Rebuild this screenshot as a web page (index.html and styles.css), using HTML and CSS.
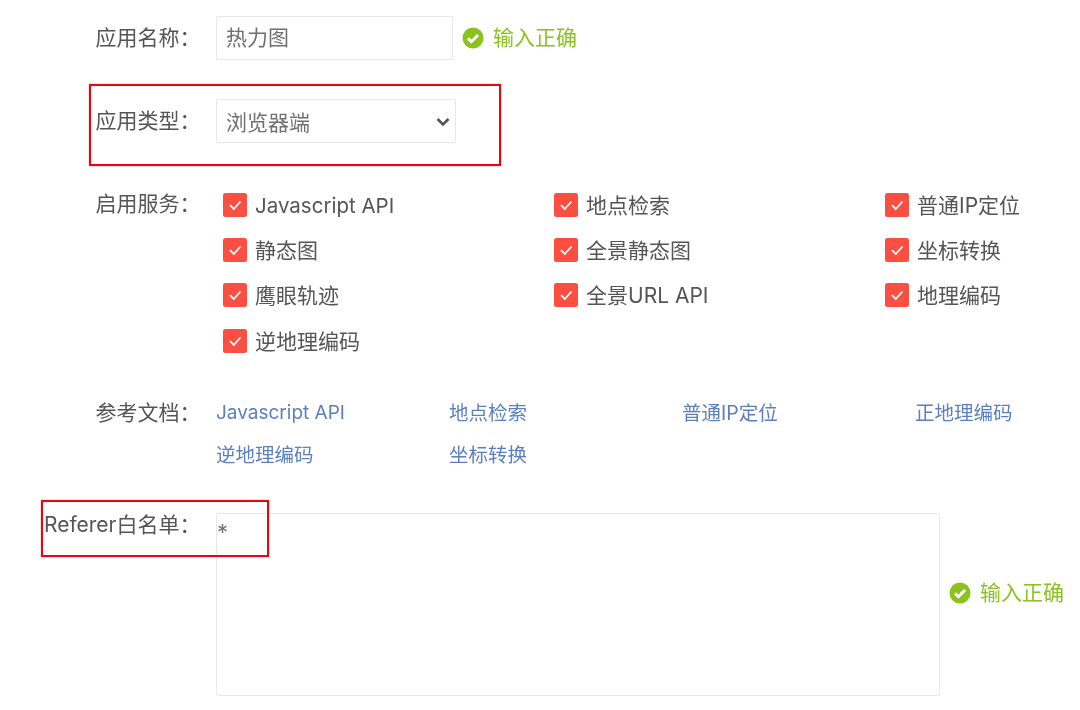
FILE: index.html
```html
<!DOCTYPE html>
<html lang="zh">
<head>
<meta charset="utf-8">
<title>应用配置</title>
<link rel="stylesheet" href="styles.css">
</head>
<body>
<form class="form">
  <div class="row row-name">
    <div class="label">应用名称：</div>
    <div class="field input-box">热力图</div>
    <div class="valid">
      <svg class="valid-icon" viewBox="0 0 22 22"><circle cx="11" cy="11" r="10.5" fill="#8cc21f"/><path d="M6 11.4l3.4 3.3L16 8" fill="none" stroke="#fff" stroke-width="3"/></svg>
      <span>输入正确</span>
    </div>
  </div>
  <div class="row row-type">
    <div class="label">应用类型：</div>
    <div class="field select-box">
      <span>浏览器端</span>
      <svg class="chevron" viewBox="0 0 14 10"><path d="M1.5 2l5.5 5.5L12.500 2" fill="none" stroke="#555" stroke-width="2.600"/></svg>
    </div>
    <div class="mark mark-type"></div>
  </div>
  <div class="row row-services">
    <div class="label">启用服务：</div>
    <div class="services">
      <div class="check check-latin"><svg class="box" viewBox="0 0 24 24"><rect width="24" height="24" rx="2.500" fill="#fb4f41"/><path d="M7 12.200l3.800 3.800L17.500 8.500" fill="none" stroke="#fff" stroke-width="1.800"/></svg>Javascript API</div>
      <div class="check"><svg class="box" viewBox="0 0 24 24"><rect width="24" height="24" rx="2.500" fill="#fb4f41"/><path d="M7 12.200l3.800 3.800L17.500 8.500" fill="none" stroke="#fff" stroke-width="1.800"/></svg>地点检索</div>
      <div class="check"><svg class="box" viewBox="0 0 24 24"><rect width="24" height="24" rx="2.500" fill="#fb4f41"/><path d="M7 12.200l3.800 3.800L17.500 8.500" fill="none" stroke="#fff" stroke-width="1.800"/></svg>普通IP定位</div>
      <div class="check"><svg class="box" viewBox="0 0 24 24"><rect width="24" height="24" rx="2.500" fill="#fb4f41"/><path d="M7 12.200l3.800 3.800L17.500 8.500" fill="none" stroke="#fff" stroke-width="1.800"/></svg>静态图</div>
      <div class="check"><svg class="box" viewBox="0 0 24 24"><rect width="24" height="24" rx="2.500" fill="#fb4f41"/><path d="M7 12.200l3.800 3.800L17.500 8.500" fill="none" stroke="#fff" stroke-width="1.800"/></svg>全景静态图</div>
      <div class="check"><svg class="box" viewBox="0 0 24 24"><rect width="24" height="24" rx="2.500" fill="#fb4f41"/><path d="M7 12.200l3.800 3.800L17.500 8.500" fill="none" stroke="#fff" stroke-width="1.800"/></svg>坐标转换</div>
      <div class="check"><svg class="box" viewBox="0 0 24 24"><rect width="24" height="24" rx="2.500" fill="#fb4f41"/><path d="M7 12.200l3.800 3.800L17.500 8.500" fill="none" stroke="#fff" stroke-width="1.800"/></svg>鹰眼轨迹</div>
      <div class="check"><svg class="box" viewBox="0 0 24 24"><rect width="24" height="24" rx="2.500" fill="#fb4f41"/><path d="M7 12.200l3.800 3.800L17.500 8.500" fill="none" stroke="#fff" stroke-width="1.800"/></svg>全景URL API</div>
      <div class="check"><svg class="box" viewBox="0 0 24 24"><rect width="24" height="24" rx="2.500" fill="#fb4f41"/><path d="M7 12.200l3.800 3.800L17.500 8.500" fill="none" stroke="#fff" stroke-width="1.800"/></svg>地理编码</div>
      <div class="check"><svg class="box" viewBox="0 0 24 24"><rect width="24" height="24" rx="2.500" fill="#fb4f41"/><path d="M7 12.200l3.800 3.800L17.500 8.500" fill="none" stroke="#fff" stroke-width="1.800"/></svg>逆地理编码</div>
    </div>
  </div>
  <div class="row row-docs">
    <div class="label">参考文档：</div>
    <div class="docs">
      <a class="doc doc-latin">Javascript API</a>
      <a class="doc">地点检索</a>
      <a class="doc">普通IP定位</a>
      <a class="doc">正地理编码</a>
      <a class="doc">逆地理编码</a>
      <a class="doc">坐标转换</a>
    </div>
  </div>
  <div class="row row-referer">
    <div class="label label-referer">Referer白名单：</div>
    <div class="field textarea-box">*</div>
    <div class="valid valid-referer">
      <svg class="valid-icon" viewBox="0 0 22 22"><circle cx="11" cy="11" r="10.5" fill="#8cc21f"/><path d="M6 11.400l3.400 3.300L16 8" fill="none" stroke="#fff" stroke-width="3"/></svg>
      <span>输入正确</span>
    </div>
    <div class="mark mark-referer"></div>
  </div>
</form>
</body>
</html>
```
FILE: styles.css
```css
* { box-sizing: border-box; }
html, body { margin: 0; background: #fff; }
body {
  width: 1080px;
  height: 710px;
  overflow: hidden;
  color: #555;
  font-family: Inter, "Noto Sans CJK SC", sans-serif;
  font-size: 21px;
}
.form { display: flex; flex-direction: column; padding-top: 16px; filter: blur(0.4px); }
.row { display: flex; position: relative; align-items: flex-start; }
.label {
  width: 200.500px;
  flex: none;
  margin-right: 15.500px;
  text-align: right;
  white-space: nowrap;
  line-height: 44px;
  color: #555;
}
.label-referer { line-height: 24px; }
.field {
  background: #fff;
  border: 1px solid #e6e8ea;
  border-radius: 2px;
  color: #707070;
}
.input-box { width: 237px; height: 44px; line-height: 42px; padding-left: 9px; }
.select-box {
  width: 240px;
  height: 44px;
  line-height: 46px;
  padding: 0 5px 0 9px;
  display: flex;
  justify-content: space-between;
}
.chevron { width: 14px; height: 10px; margin-top: 17px; }
.textarea-box { width: 724px; height: 183px; line-height: 36px; font-size: 22px; }
.valid { display: flex; align-items: center; gap: 9px; color: #8cc21f; margin-left: 9px; height: 44px; }
.valid-icon { width: 22px; height: 22px; }
.valid span { margin-bottom: 4px; }
.valid-referer { margin-top: 58px; }
.row-type { margin-top: 39px; }
.row-services { margin-top: 39px; }
.services {
  display: grid;
  grid-template-columns: 331px 331px 1fr;
  grid-auto-rows: 45.300px;
  width: 864px;
  padding-left: 7px;
}
.check { display: flex; align-items: center; gap: 8px; color: #555; white-space: nowrap; font-size: 21px; padding-bottom: 2px; }
.check-latin { font-size: 20.500px; padding-bottom: 0; padding-top: 2px; }
.box { width: 24px; height: 24px; flex: none; margin-top: 2px; }
.check-latin .box { margin-top: 0; margin-bottom: 2px; }
.row-docs { margin-top: 29px; }
.row-docs .label { line-height: 42px; }
.docs {
  display: grid;
  grid-template-columns: 233px 233px 233px 1fr;
  grid-auto-rows: 42px;
  width: 864px;
}
.doc { color: #5c7fc0; font-size: 19.500px; line-height: 42px; white-space: nowrap; }
.doc-latin { font-size: 19px; }
.row-referer { margin-top: 37px; }
.mark { position: absolute; border: 2px solid #f3000f; box-shadow: 0 0 1px #ff5060; pointer-events: none; }
.mark-type { left: 89px; top: -15px; width: 412px; height: 82px; }
.mark-referer { left: 41px; top: -13px; width: 228px; height: 57px; }
```
